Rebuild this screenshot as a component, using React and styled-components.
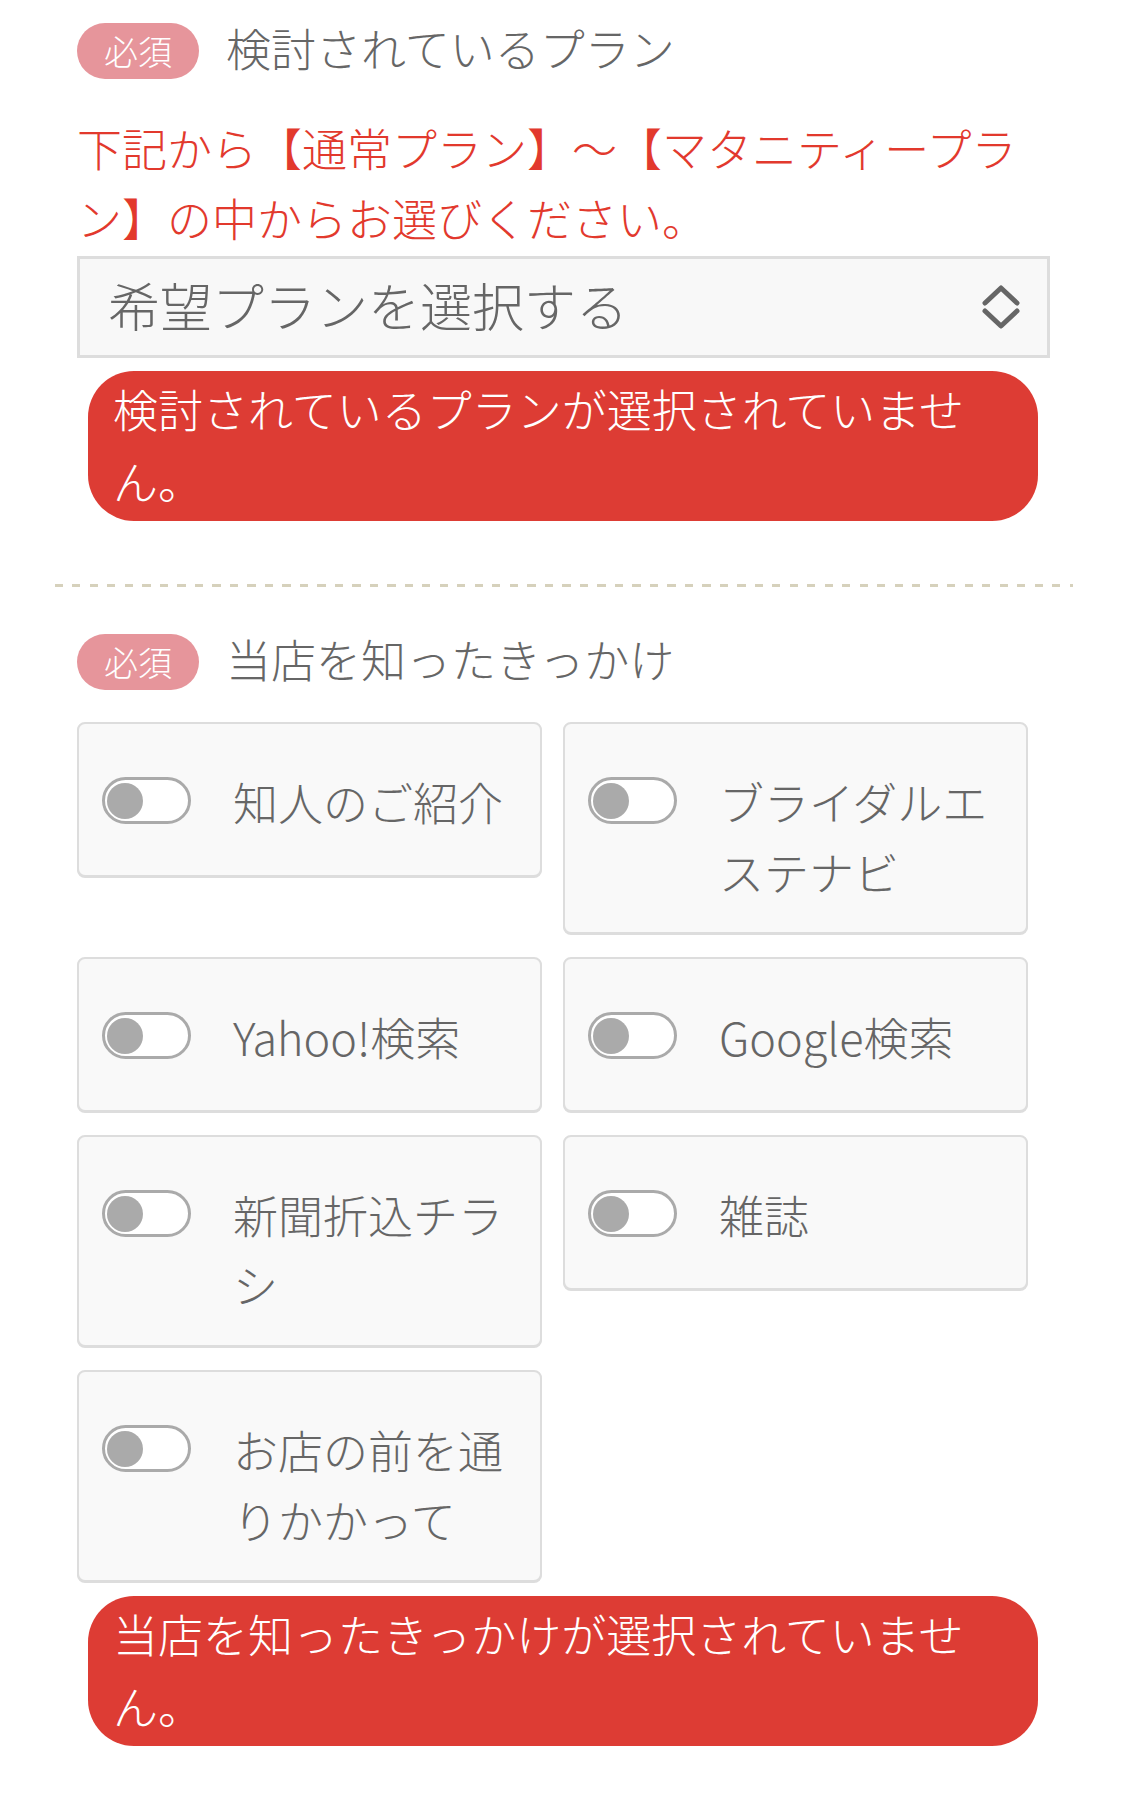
import React from 'react';
import styled, {createGlobalStyle} from "styled-components";

const GlobalStyle = createGlobalStyle`
  html, body {
    margin: 0;
    padding: 0;
    background: #ffffff;
  }
  body {
    font-family: "Noto Sans CJK JP", "Noto Sans", sans-serif;
    font-weight: 300;
    color: #666666;
  }
  * {
    box-sizing: border-box;
  }
`;

const Page = styled.div`
  width: 1125px;
  padding: 22px 75px 47px 77px;
`;

const Section = styled.section`
  display: flex;
  flex-direction: column;
  align-items: flex-start;
`;

const HeaderRow = styled.div`
  display: flex;
  align-items: center;
  gap: 27px;
  height: 57px;
  margin-top: ${props => props.top || 0}px;
`;

const Badge = styled.span`
  display: inline-block;
  height: 56px;
  line-height: 56px;
  padding: 0 27px;
  border-radius: 28px;
  background: #e6959b;
  color: #ffffff;
  font-size: 34px;
`;

const Title = styled.h2`
  margin: 0;
  padding-bottom: 7px;
  font-size: 45px;
  font-weight: 300;
  line-height: 57px;
  color: #666666;
`;

const Notice = styled.p`
  margin: 34px 0 0;
  font-size: 45px;
  line-height: 70px;
  color: #e2392d;
`;

const SelectWrap = styled.div`
  position: relative;
  width: 100%;
  margin-top: 3px;
`;

const Select = styled.select`
  appearance: none;
  -webkit-appearance: none;
  display: block;
  width: 100%;
  height: 102px;
  margin: 0;
  padding: 0 90px 6px 28px;
  border: 3px solid #dddddd;
  border-radius: 0;
  background: #f8f8f8;
  font-family: "Noto Sans CJK JP", "Noto Sans", sans-serif;
  font-weight: 300;
  font-size: 52px;
  color: #666666;
  outline: none;
`;

const SelectArrow = styled.svg`
  position: absolute;
  right: 29px;
  top: 50%;
  transform: translateY(-50%);
  width: 40px;
  height: 46px;
  pointer-events: none;
`;

const ErrorBox = styled.div`
  width: 950px;
  margin: ${props => props.top || 13}px 0 0 11px;
  padding: 2px 25px 4px;
  border-radius: 46px;
  background: #dd3c34;
  color: #ffffff;
  font-size: 45px;
  line-height: 72px;
`;

const Divider = styled.hr`
  height: 3px;
  margin: 63px -23px 0 -22px;
  border: none;
  background: repeating-linear-gradient(
    to right,
    #d6d1bc 0,
    #d6d1bc 8px,
    transparent 8px,
    transparent 17.5px
  );
`;

const Options = styled.div`
  display: flex;
  flex-wrap: wrap;
  align-items: flex-start;
  column-gap: 21px;
  row-gap: 23px;
  width: 951px;
  margin-top: 32px;
`;

const Card = styled.label`
  display: flex;
  align-items: flex-start;
  gap: 42px;
  width: 465px;
  padding: 43px 20px 25px 23px;
  border: 2px solid #dddddd;
  border-radius: 8px;
  background: #f9f9f9;
  box-shadow: 0 1px 0 #dddddd;
  cursor: pointer;
`;

const HiddenInput = styled.input`
  position: absolute;
  opacity: 0;
  width: 0;
  height: 0;
`;

const Toggle = styled.span`
  display: flex;
  align-items: center;
  flex-shrink: 0;
  width: 89px;
  height: 47px;
  margin-top: 10px;
  padding: 0 2px;
  border: 3px solid #aaaaaa;
  border-radius: 24px;
  background: #ffffff;
`;

const Knob = styled.span`
  width: 36px;
  height: 36px;
  border-radius: 50%;
  background: #aaaaaa;
`;

const LabelText = styled.span`
  min-height: 83px;
  font-size: 45px;
  line-height: 70px;
  color: #666666;
`;

const sources = [
    "知人のご紹介",
    "ブライダルエステナビ",
    "Yahoo!検索",
    "Google検索",
    "新聞折込チラシ",
    "雑誌",
    "お店の前を通りかかって",
];

function Option({label}) {
    return (
        <Card>
            <HiddenInput type="checkbox"/>
            <Toggle>
                <Knob/>
            </Toggle>
            <LabelText>{label}</LabelText>
        </Card>
    );
}

function App() {
    return (
        <Page>
            <GlobalStyle/>
            <Section>
                <HeaderRow>
                    <Badge>必須</Badge>
                    <Title>検討されているプラン</Title>
                </HeaderRow>
                <Notice>下記から【通常プラン】～【マタニティープラン】の中からお選びください。</Notice>
                <SelectWrap>
                    <Select defaultValue="">
                        <option value="">希望プランを選択する</option>
                    </Select>
                    <SelectArrow viewBox={"0 0 40 46"} xmlns={"http://www.w3.org/2000/svg"}>
                        <g fill="none" stroke="#666666" strokeWidth="5" strokeLinecap="round" strokeLinejoin="round">
                            <polyline points="4,19 20,4 36,19"/>
                            <polyline points="4,27 20,42 36,27"/>
                        </g>
                    </SelectArrow>
                </SelectWrap>
                <ErrorBox>検討されているプランが選択されていません。</ErrorBox>
            </Section>

            <Divider/>

            <Section>
                <HeaderRow top={46}>
                    <Badge>必須</Badge>
                    <Title>当店を知ったきっかけ</Title>
                </HeaderRow>
                <Options>
                    {sources.map(s => <Option key={s} label={s}/>)}
                </Options>
                <ErrorBox top={14}>当店を知ったきっかけが選択されていません。</ErrorBox>
            </Section>
        </Page>
    );
}

export default App;
